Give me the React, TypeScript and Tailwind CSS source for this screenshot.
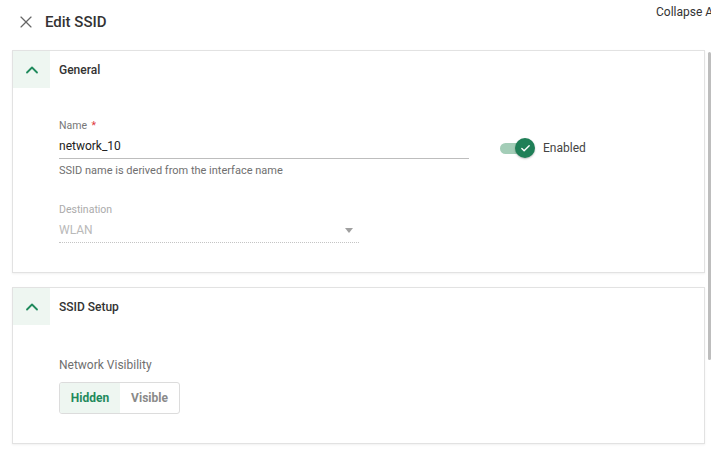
import { ChevronUp, X, Check } from "lucide-react";

function SectionHeader({ title }: { title: string }) {
  return (
    <div className="flex items-center h-[37px]">
      <div className="w-[37px] h-full flex items-center justify-center bg-[#eef6f1]">
        <ChevronUp size={20} strokeWidth={2.2} className="text-[#1f8a5c]" />
      </div>
      <span className="ml-[9px] text-[12px] font-medium text-[#333]">{title}</span>
    </div>
  );
}

export default function App() {
  return (
    <div className="w-[711px] h-[451px] overflow-hidden bg-white font-['Roboto',sans-serif] text-[#333]">
      {/* Top bar */}
      <div className="flex items-start h-[50px]">
        <div className="flex items-center h-[44px] pl-[16px]">
          <X size={20} strokeWidth={1.4} className="text-[#666]" />
          <span className="ml-[9px] text-[15px] font-medium text-[#333]">Edit SSID</span>
        </div>
        <span className="ml-auto mr-[-8px] mt-[3px] text-[12px] text-[#333] whitespace-nowrap">Collapse All</span>
      </div>

      <div className="flex">
        <div className="ml-[12px] w-[693px] flex flex-col gap-[14px]">
          {/* General */}
          <div className="border border-[#e2e2e2] shadow-[0_1px_2px_rgba(0,0,0,0.06)] bg-white">
            <SectionHeader title="General" />
            <div className="pl-[46px] pt-[31px] pb-[29px]">
              <div className="flex items-start">
                <div className="w-[410px]">
                  <div className="text-[10.5px] leading-[14px] text-[#777]">
                    Name <span className="ml-[2px] text-[#e0363b]">*</span>
                  </div>
                  <div className="mt-[4px] pb-[3px] border-b border-[#bdbdbd] text-[12px] leading-[18px] text-[#222]">
                    network_10
                  </div>
                  <div className="mt-[5px] text-[11px] leading-[14px] text-[#6f6f6f]">
                    SSID name is derived from the interface name
                  </div>
                </div>
                <div className="ml-[31px] mt-[19px] h-[20px] flex items-center">
                  <div className="relative w-[35px] h-[20px] flex items-center">
                    <div className="w-[32px] h-[11px] rounded-full bg-[#a3cdb7]" />
                    <div className="absolute right-0 top-0 w-[20px] h-[20px] rounded-full bg-[#1f7f57] flex items-center justify-center shadow-[0_1px_2px_rgba(0,0,0,0.25)]">
                      <Check size={11} strokeWidth={3} className="text-white" />
                    </div>
                  </div>
                  <span className="ml-[8px] text-[12px] text-[#444]">Enabled</span>
                </div>
              </div>

              <div className="mt-[25px] w-[300px]">
                <div className="text-[10.5px] leading-[14px] text-[#ababab]">Destination</div>
                <div className="mt-[4px] pb-[3px] border-b border-dotted border-[#c4c4c4] flex items-center text-[12px] leading-[18px] text-[#b9b9b9]">
                  <span>WLAN</span>
                  <svg width="8" height="5" viewBox="0 0 8 5" className="ml-auto mr-[6px]">
                    <path d="M0 0h8L4 5z" fill="#a0a0a0" />
                  </svg>
                </div>
              </div>
            </div>
          </div>

          {/* SSID Setup */}
          <div className="border border-[#e2e2e2] shadow-[0_1px_2px_rgba(0,0,0,0.06)] bg-white">
            <SectionHeader title="SSID Setup" />
            <div className="pl-[46px] pt-[32px] pb-[29px]">
              <div className="text-[12px] leading-[16px] text-[#6f6f6f]">Network Visibility</div>
              <div className="mt-[9px] inline-flex h-[32px] border border-[#dcdcdc] rounded-[3px] overflow-hidden">
                <div className="w-[60px] flex items-center justify-center bg-[#eef6f1] text-[12px] font-bold text-[#1f8a5c]">
                  Hidden
                </div>
                <div className="w-[59px] flex items-center justify-center text-[12px] font-bold text-[#8a8a8a]">
                  Visible
                </div>
              </div>
            </div>
          </div>
        </div>

        <div className="ml-[3px] mt-[2px] w-[3px] h-[308px] rounded-full bg-[#bdbdbd]" />
      </div>
    </div>
  );
}
